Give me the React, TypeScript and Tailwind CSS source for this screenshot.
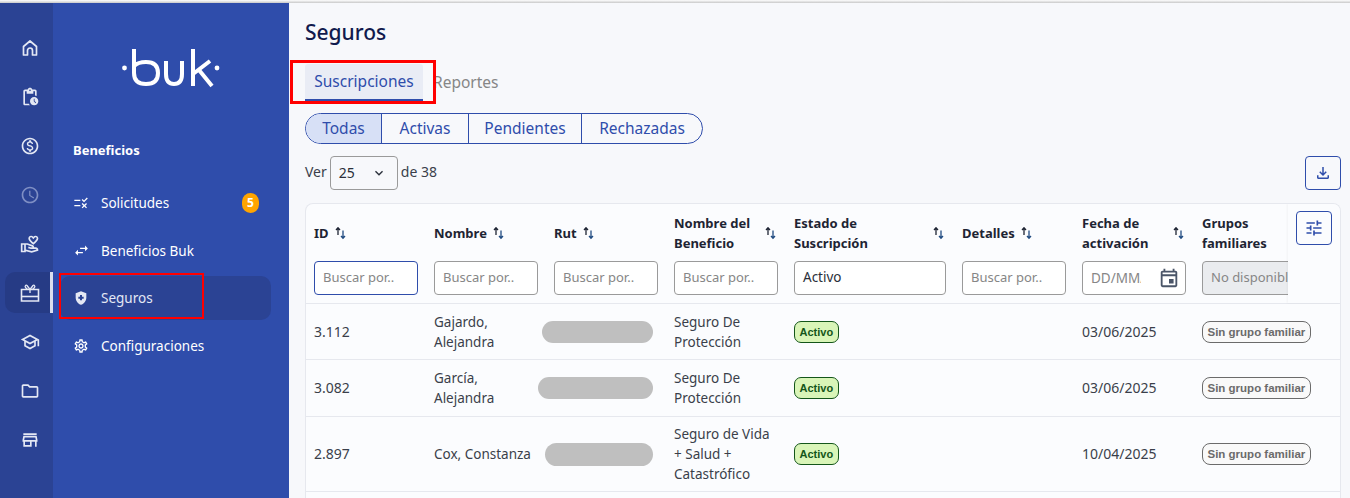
import {
  MdOutlinePendingActions,
  MdOutlineMonetizationOn,
  MdOutlineSchedule,
  MdOutlineVolunteerActivism,
  MdOutlineSchool,
  MdOutlineFolder,
  MdOutlineStore,
  MdOutlineRule,
  MdSwapHoriz,
  MdHealthAndSafety,
  MdOutlineSettings,
  MdOutlineFileDownload,
  MdOutlineTune,
  MdOutlineEvent,
  MdOutlineKeyboardArrowDown,
} from "react-icons/md"

function HomeIcon({ className }: { className?: string }) {
  return (
    <svg viewBox="0 0 20 20" fill="none" stroke="currentColor" strokeWidth="1.7" strokeLinejoin="round" className={className}>
      <path d="M3.5 8.5L10 3L16.5 8.5V17H12.5V12.5A2.5 2.5 0 0 0 7.5 12.5V17H3.5Z" />
    </svg>
  )
}

function GiftIcon({ className }: { className?: string }) {
  return (
    <svg viewBox="0 0 20 20" fill="none" stroke="currentColor" strokeWidth="1.6" className={className}>
      <path d="M1.5 6.5H18.5V18H1.5Z" />
      <path d="M1.5 13.5H18.5" />
      <path d="M10 6.5L7 2.5C6 1.5 4.5 3 5.5 4.5L7.5 6.5M10 6.5L13 2.5C14 1.5 15.5 3 14.5 4.5L12.5 6.5M10 6.5V10" strokeWidth="1.3" />
    </svg>
  )
}

const railIcons = [
  { icon: HomeIcon },
  { icon: MdOutlinePendingActions },
  { icon: MdOutlineMonetizationOn },
  { icon: MdOutlineSchedule, dim: true },
  { icon: MdOutlineVolunteerActivism },
  { icon: GiftIcon, active: true },
  { icon: MdOutlineSchool },
  { icon: MdOutlineFolder },
  { icon: MdOutlineStore },
]

const rows = [
  { id: "3.112", name: ["Gajardo,", "Alejandra"], blur: "w-[111px] h-[22px]", benefit: ["Seguro De", "Protección"], date: "03/06/2025", h: "h-[56px]" },
  { id: "3.082", name: ["García,", "Alejandra"], blur: "w-[115px] h-[22px]", benefit: ["Seguro De", "Protección"], date: "03/06/2025", h: "h-[57px]" },
  { id: "2.897", name: ["Cox, Constanza"], blur: "w-[108px] h-[23px]", benefit: ["Seguro de Vida", "+ Salud +", "Catastrófico"], date: "10/04/2025", h: "h-[75px]" },
]

const cols = "grid grid-cols-[119px_120px_120px_120px_168px_120px_120px_148px]"

function SortIcon() {
  return (
    <svg width="11" height="14" viewBox="0 0 11 14" fill="none" strokeWidth="1.3" className="shrink-0">
      <path d="M3 9V2M1 4L3 1.8L5 4" stroke="#1e2433" />
      <path d="M8 4.5V12M6 10L8 12.2L10 10" stroke="#1f4a80" />
    </svg>
  )
}

function HeadCell({ lines, wide, first }: { lines: string[]; wide?: boolean; first?: boolean }) {
  return (
    <div className={`flex h-[40px] items-center text-[13px] font-bold leading-[20px] text-[#1e2433] ${first ? "pl-[8px]" : "pl-[9px]"} ${wide ? "pr-[9px]" : ""}`}>
      <div className={wide ? "flex-1 whitespace-nowrap" : "mr-[6px]"}>
        {lines.map((l) => (
          <div key={l}>{l}</div>
        ))}
      </div>
      <SortIcon />
    </div>
  )
}

function SearchBox({ focus }: { focus?: boolean }) {
  return (
    <div
      className={`mt-[8px] mr-[7px] flex h-[34px] items-center rounded-[4px] border bg-white pl-[8px] text-[13px] text-[#868686] ${
        focus ? "ml-[8px] border-[#2f4dab]" : "ml-[9px] border-[#9a9a9a]"
      }`}
    >
      Buscar por..
    </div>
  )
}

function SideItem({ icon, label, badge, active }: { icon: React.ReactNode; label: string; badge?: string; active?: boolean }) {
  return (
    <div className={`flex h-[44px] items-center rounded-[10px] pl-[13px] pr-[12px] text-[13.5px] ${active ? "bg-[#2b4394] text-[#e4e8f4]" : ""}`}>
      <span className="w-[28px]">{icon}</span>
      <span className="flex-1 leading-[20px]">{label}</span>
      {badge && (
        <span className="flex h-[20px] w-[17px] items-center justify-center rounded-full bg-[#ffa400] text-[12px] font-bold">{badge}</span>
      )}
    </div>
  )
}

export default function App() {
  return (
    <div className="flex h-[498px] w-[1350px] overflow-hidden bg-[#f7f8fb] font-['Noto_Sans',sans-serif] text-[14px] text-[#3a3f4a]">
      <div className="relative flex w-[289px] shrink-0">
        <nav className="flex w-[53px] shrink-0 flex-col bg-[#2b4394] pt-[27px]">
          {railIcons.map(({ icon: Icon, dim, active }, i) => (
            <div
              key={i}
              className={`ml-[5px] flex h-[41px] w-[48px] items-center justify-center rounded-l-[10px] border-r-[3px] pl-[5px] ${
                i > 0 ? "mt-[8px]" : ""
              } ${active ? "border-[#d9deee] bg-[#263b85]" : "border-transparent"}`}
            >
              <Icon className={`h-[20px] w-[20px] ${dim ? "text-[#7f8fc4]" : "text-[#e4e8f4]"}`} />
            </div>
          ))}
        </nav>
        <aside className="flex flex-1 flex-col bg-[#2f4dab] pl-[7px] pr-[18px] text-white">
          <div className="flex h-[120px] justify-center pt-[48px]">
            <svg width="100" height="40" viewBox="0 0 100 40" fill="none" stroke="white" strokeWidth="4" className="ml-[11px]">
              <circle cx="3.5" cy="20" r="2.4" fill="white" stroke="none" />
              <path d="M13 1V25C13 32 17 36 25 36C33 36 37 32 37 25C37 18 33 14 25 14C20 14 16 15 13 18" />
              <path d="M45 13V26C45 33 48 36 53 36C58 36 61 33 61 26V13" />
              <path d="M72 1V38M72 26L89 13M78 22L91 38" />
              <circle cx="96" cy="20" r="2.4" fill="white" stroke="none" />
            </svg>
          </div>
          <div className="ml-[13px] mt-[20px] text-[13px] font-bold leading-[20px]">Beneficios</div>
          <div className="mt-[21px] flex flex-col gap-[3.6px]">
            <SideItem icon={<MdOutlineRule className="h-[16px] w-[16px]" />} label="Solicitudes" badge="5" />
            <SideItem icon={<MdSwapHoriz className="h-[17px] w-[17px]" />} label="Beneficios Buk" />
            <SideItem icon={<MdHealthAndSafety className="h-[16px] w-[16px]" />} label="Seguros" active />
            <SideItem icon={<MdOutlineSettings className="h-[16px] w-[16px]" />} label="Configuraciones" />
          </div>
        </aside>
      </div>

      <main className="relative min-w-0 flex-1 pl-[16px] pr-[9px]">
        <h1 className="mt-[19px] text-[21px] font-medium leading-[26px] text-[#111a4d]">Seguros</h1>
        <div className="mt-[19px] flex items-center text-[15.5px]">
          <div className="flex h-[37px] w-[118px] items-center justify-center rounded-t-[3px] border-b-[2px] border-[#2f4dab] bg-[#e9ecf5] text-[#2f4dab]">
            Suscripciones
          </div>
          <div className="ml-[10px] text-[#868686]">Reportes</div>
        </div>
        <div className="mt-[12px] flex h-[31px] w-[398px] overflow-hidden rounded-full border border-[#2f4dab] text-[15.5px] text-[#2f4dab]">
          <div className="flex w-[76px] items-center justify-center border-r border-[#2f4dab] bg-[#d7e0f6]">Todas</div>
          <div className="flex w-[87px] items-center justify-center border-r border-[#2f4dab]">Activas</div>
          <div className="flex w-[113px] items-center justify-center border-r border-[#2f4dab]">Pendientes</div>
          <div className="flex flex-1 items-center justify-center">Rechazadas</div>
        </div>
        <div className="mt-[12px] flex h-[34px] items-center justify-between">
          <div className="flex items-center">
            <span className="mb-[4px]">Ver</span>
            <div className="ml-[3px] flex h-[34px] w-[68px] items-center justify-between rounded-[4px] border border-[#9a9a9a] pb-[1px] pl-[8px] pr-[10px] text-[#2a2f3a]">
              25
              <MdOutlineKeyboardArrowDown className="h-[16px] w-[16px]" />
            </div>
            <span className="mb-[4px] ml-[3px]">de 38</span>
          </div>
          <div className="flex h-[34px] w-[36px] items-center justify-center rounded-[4px] border border-[#2f4dab] text-[#2f4dab]">
            <MdOutlineFileDownload className="h-[18px] w-[18px]" />
          </div>
        </div>

        <div className="relative mt-[13px] overflow-hidden rounded-t-[8px] border border-b-0 border-[#e6e8ee] bg-[#fbfcfe]">
          <div className={`${cols} h-[100px] content-start border-b border-[#e6e8ee] pt-[9px]`}>
            <HeadCell lines={["ID"]} first />
            <HeadCell lines={["Nombre"]} />
            <HeadCell lines={["Rut"]} />
            <HeadCell lines={["Nombre del", "Beneficio"]} wide />
            <HeadCell lines={["Estado de", "Suscripción"]} wide />
            <HeadCell lines={["Detalles"]} />
            <HeadCell lines={["Fecha de", "activación"]} wide />
            <div className="h-[40px] pl-[9px] text-[13px] font-bold leading-[20px] text-[#1e2433]">
              <div>Grupos</div>
              <div>familiares</div>
            </div>
            <SearchBox focus />
            <SearchBox />
            <SearchBox />
            <SearchBox />
            <div className="ml-[9px] mr-[7px] mt-[8px] flex h-[34px] items-center rounded-[4px] border border-[#9a9a9a] bg-white pb-[2px] pl-[8px] text-[13.5px] text-[#2a2f3a]">Activo</div>
            <SearchBox />
            <div className="ml-[9px] mr-[7px] mt-[8px] flex h-[34px] items-center justify-between rounded-[4px] border border-[#9a9a9a] bg-white pl-[8px] pr-[5px] text-[13.5px] text-[#868686]">
              <span className="w-[50px] overflow-hidden whitespace-nowrap">DD/MM/AAAA</span>
              <MdOutlineEvent className="h-[22px] w-[22px] text-[#4a5568]" />
            </div>
            <div className="ml-[9px] mt-[8px] flex h-[34px] items-center overflow-hidden whitespace-nowrap rounded-l-[4px] border border-[#9a9a9a] bg-[#eaecef] pl-[8px] text-[13px] text-[#868686]">
              No disponible
            </div>
          </div>
          {rows.map((r) => (
            <div key={r.id} className={`${cols} ${r.h} items-center border-b border-[#e6e8ee] leading-[20px]`}>
              <div className="pl-[8px]">{r.id}</div>
              <div className="whitespace-nowrap pl-[9px] text-[13.5px]">
                {r.name.map((l) => (
                  <div key={l}>{l}</div>
                ))}
              </div>
              <div className="flex justify-end pr-[12px]">
                <div className={`${r.blur} shrink-0 rounded-full bg-[#bfbfbf]`} />
              </div>
              <div className="pl-[9px] text-[13.5px]">
                {r.benefit.map((l) => (
                  <div key={l}>{l}</div>
                ))}
              </div>
              <div className="pl-[9px]">
                <span className="inline-flex h-[22px] items-center rounded-[7px] border border-[#14561a] bg-[#d9f5b8] px-[4.5px] font-['Liberation_Sans',sans-serif] text-[11px] font-bold text-[#14561a]">
                  Activo
                </span>
              </div>
              <div />
              <div className="pl-[9px]">{r.date}</div>
              <div className="pl-[9px]">
                <span className="inline-flex h-[22px] items-center whitespace-nowrap rounded-[8px] border border-[#6b6b6b] bg-[#f9f9f9] px-[4.5px] font-['Liberation_Sans',sans-serif] text-[11.5px] font-bold text-[#6b6b6b]">
                  Sin grupo familiar
                </span>
              </div>
            </div>
          ))}
          <div className="h-[40px]" />
          <div className="absolute right-0 top-0 h-[99px] w-[52px] bg-[#fbfcfe] pl-[8px] pt-[7px] shadow-[-1px_0_2px_rgba(0,0,0,0.04)]">
            <div className="flex h-[34px] w-[36px] items-center justify-center rounded-[4px] border border-[#2f4dab] text-[#2f4dab]">
              <MdOutlineTune className="h-[20px] w-[20px]" />
            </div>
          </div>
        </div>
      </main>

      <div className="absolute left-0 top-0 h-[3px] w-[1350px] bg-gradient-to-b from-[#ffffff] to-[#c9c9c9]" />
      <div className="absolute left-[59px] top-[273px] h-[46px] w-[145px] border-[2px] border-[#ff0000]" />
      <div className="absolute left-[290px] top-[60px] h-[44px] w-[146px] border-[3px] border-[#ff0000]" />
    </div>
  )
}
